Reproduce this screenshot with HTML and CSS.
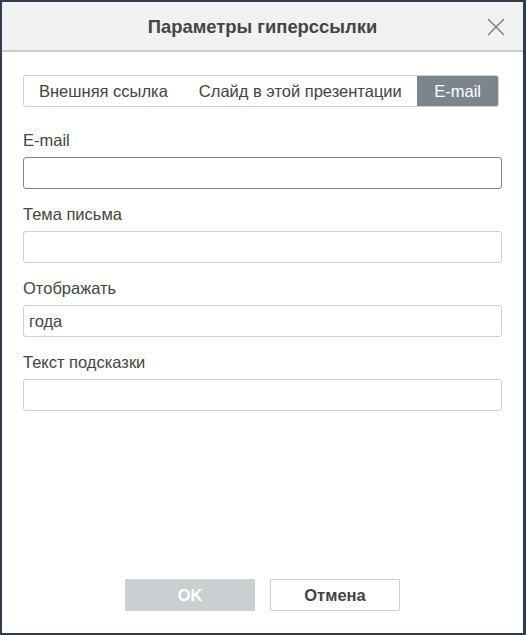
FILE: index.html
```html
<!DOCTYPE html>
<html lang="ru">
<head>
<meta charset="utf-8">
<link rel="stylesheet" href="styles.css">
</head>
<body>
<div class="dialog">
  <div class="header">
    <div class="title">Параметры гиперссылки</div>
    <div class="close">
      <svg width="18" height="18" viewBox="0 0 18 18"><path d="M1 1L17 17M17 1L1 17" stroke="#7a7a7a" stroke-width="1.4" fill="none"/></svg>
    </div>
  </div>
  <div class="body">
    <div class="tabs">
      <div class="tab t1">Внешняя ссылка</div>
      <div class="tab t2">Слайд в этой презентации</div>
      <div class="tab active">E-mail</div>
    </div>
    <div class="field">
      <div class="label">E-mail</div>
      <div class="input focused"></div>
    </div>
    <div class="field">
      <div class="label">Тема письма</div>
      <div class="input"></div>
    </div>
    <div class="field">
      <div class="label">Отображать</div>
      <div class="input">года</div>
    </div>
    <div class="field">
      <div class="label">Текст подсказки</div>
      <div class="input"></div>
    </div>
  </div>
  <div class="footer">
    <div class="btn primary">OK</div>
    <div class="btn">Отмена</div>
  </div>
</div>
</body>
</html>
```
FILE: styles.css
```css
html, body {
  margin: 0;
  padding: 0;
}
body {
  font-family: "Liberation Sans", Arial, sans-serif;
  color: #444;
  background: #2e3d4f;
}
.dialog {
  box-sizing: border-box;
  width: 526px;
  height: 635px;
  border-style: solid;
  border-color: #2e3d4f;
  border-width: 2px 3px 2px 2px;
  background: #fff;
  display: flex;
  flex-direction: column;
}
.header {
  height: 48px;
  background: #f1f1f1;
  border-bottom: 2px solid #cbcbcb;
  position: relative;
  display: flex;
  align-items: center;
  justify-content: center;
}
.title {
  font-size: 18.4px;
  font-weight: bold;
  color: #444;
  margin-top: 1px;
}
.close {
  position: absolute;
  right: 18px;
  top: 16px;
  width: 18px;
  height: 18px;
}
.close svg { display: block; }
.body {
  flex: 1;
  padding: 23px 21px 0 21px;
}
.tabs {
  display: flex;
  width: 476px;
  height: 32px;
  box-sizing: border-box;
  border: 1px solid #cfcfcf;
  border-radius: 3px;
  overflow: hidden;
  font-size: 16.5px;
}
.tab {
  display: flex;
  align-items: center;
  color: #444;
  white-space: nowrap;
}
.tab.t1 { padding: 0 15px 0 15px; }
.tab.t2 { padding: 0 13px 0 16px; }
.tab.active {
  margin-left: auto;
  background: #7d858c;
  color: #fff;
  padding: 0 17px;
}
.field {
  display: flex;
  flex-direction: column;
}
.label {
  font-size: 16.5px;
  height: 18px;
  line-height: 18px;
  margin-top: 16px;
  margin-bottom: 8px;
}
.tabs + .field .label { margin-top: 24px; }
.input {
  width: 479px;
  height: 32px;
  box-sizing: border-box;
  border: 1px solid #cfcfcf;
  border-radius: 3px;
  font-size: 16.5px;
  line-height: 30px;
  padding: 0 5px;
  color: #444;
}
.input.focused {
  border-color: #848484;
}
.footer {
  display: flex;
  justify-content: center;
  gap: 15px;
  padding-bottom: 22px;
}
.btn {
  width: 130px;
  height: 32px;
  box-sizing: border-box;
  border: 1px solid #cfcfcf;
  border-radius: 1px;
  display: flex;
  align-items: center;
  justify-content: center;
  font-size: 16.5px;
  font-weight: bold;
  color: #444;
  background: #fff;
}
.btn.primary {
  background: #cbcfd2;
  border-color: #cbcfd2;
  color: #fff;
}
```
